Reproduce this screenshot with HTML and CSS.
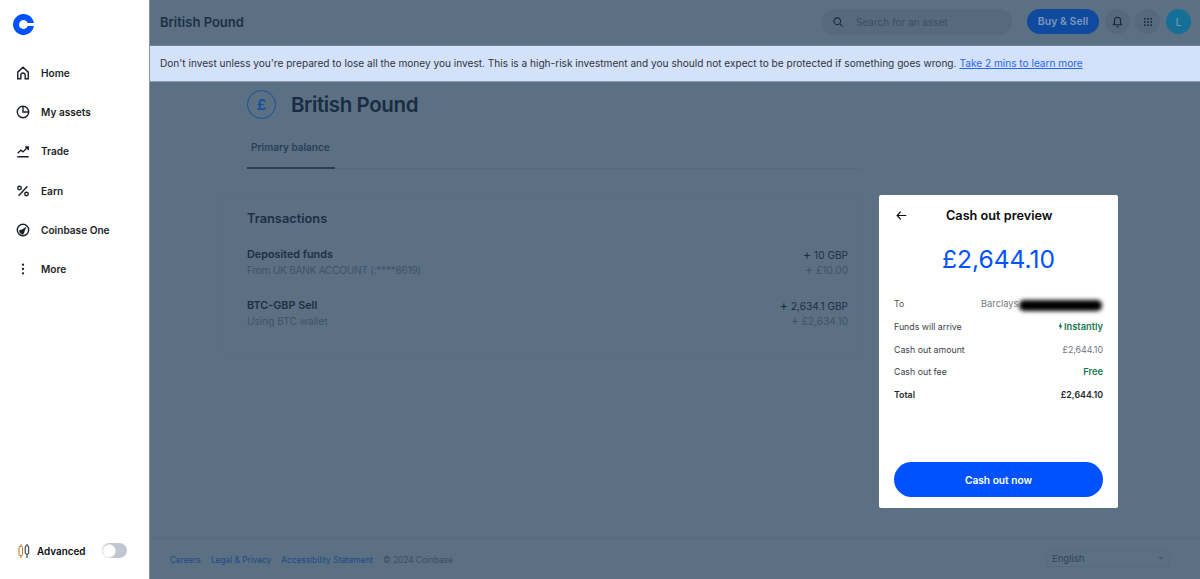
FILE: index.html
```html
<!DOCTYPE html>
<html lang="en">
<head>
    <meta charset="UTF-8">
    <meta name="viewport" content="width=device-width, initial-scale=1.0">
    <title>British Pound</title>
    <link rel="stylesheet" href="styles.css">
</head>
<body>

    <aside class="sidebar">
        <svg class="logo" viewBox="0 0 21 21"><path fill="#0052ff" d="M20.890 9A10.500 10.500 0 1 0 20.890 12H14.740A4.500 4.500 0 1 1 14.740 9z"/></svg>
        <nav class="nav">
            <a class="nav-item">
                <svg viewBox="0 0 16 16"><path d="M2 7 8 1.500 14 7v7.500h-3.500V10.500a2.500 2.500 0 0 0-5 0v4H2z"/></svg>
                Home
            </a>
            <a class="nav-item">
                <svg viewBox="0 0 16 16"><circle cx="8" cy="8" r="6.500"/><path d="M8 1.500V8h6.500"/></svg>
                My assets
            </a>
            <a class="nav-item">
                <svg viewBox="0 0 16 16"><path d="M1.500 14.500h13M2 10.500l3.500-3.500 2.500 2 5.500-5.500M10.500 3.500h3.500V7"/></svg>
                Trade
            </a>
            <a class="nav-item">
                <svg viewBox="0 0 16 16"><path d="M13 2.500 3 13.500"/><circle cx="4" cy="4.500" r="2"/><circle cx="12" cy="11.500" r="2"/></svg>
                Earn
            </a>
            <a class="nav-item">
                <svg viewBox="0 0 16 16"><circle cx="8" cy="8" r="6.500"/><path class="solid" d="M12 4 9.800 9.500 8.500 13 6 12.500 3.800 10.500 3.800 8 7 7.500z"/></svg>
                Coinbase One
            </a>
            <a class="nav-item">
                <svg viewBox="0 0 16 16"><circle class="solid" cx="8" cy="3" r="1.300"/><circle class="solid" cx="8" cy="8" r="1.300"/><circle class="solid" cx="8" cy="13" r="1.300"/></svg>
                More
            </a>
        </nav>
        <div class="advanced">
            <svg class="candles" viewBox="0 0 12 14">
                <path stroke="#b5761b" d="M3 0v14"/>
                <rect x="1" y="2.500" width="3.500" height="9" rx="1" fill="#fff" stroke="#b5761b"/>
                <path stroke="#1c2b3a" d="M9 0v14"/>
                <rect x="7.200" y="2" width="3.500" height="8" rx="1" fill="#fff" stroke="#1c2b3a"/>
            </svg>
            <span>Advanced</span>
            <span class="toggle"><span class="knob"></span></span>
        </div>
    </aside>

    <div class="main">
        <header class="topbar">
            <div class="page-name">British Pound</div>
            <div class="search">
                <svg viewBox="0 0 16 16"><circle cx="7" cy="7" r="4.500"/><path d="m10.500 10.500 3.500 3.500"/></svg>
                Search for an asset
            </div>
            <button class="buy-button">Buy &amp; Sell</button>
            <div class="round-button">
                <svg viewBox="0 0 16 16"><path d="M3 12h10l-1.300-2V6.500a3.700 3.700 0 0 0-7.400 0V10zM6.500 14.500h3"/></svg>
            </div>
            <div class="round-button">
                <svg class="dots" viewBox="0 0 10 10">
                    <rect x="0" y="0" width="2" height="2"/><rect x="4" y="0" width="2" height="2"/><rect x="8" y="0" width="2" height="2"/>
                    <rect x="0" y="4" width="2" height="2"/><rect x="4" y="4" width="2" height="2"/><rect x="8" y="4" width="2" height="2"/>
                    <rect x="0" y="8" width="2" height="2"/><rect x="4" y="8" width="2" height="2"/><rect x="8" y="8" width="2" height="2"/>
                </svg>
            </div>
            <div class="avatar">L</div>
        </header>

        <div class="banner">
            Don't invest unless you're prepared to lose all the money you invest. This is a high-risk investment and you should not expect to be protected if something goes wrong.
            <a href="#">Take 2 mins to learn more</a>
        </div>

        <div class="content">
            <div class="asset-head">
                <div class="asset-icon">£</div>
                <h1>British Pound</h1>
            </div>
            <div class="tabs">
                <div class="tab">Primary balance</div>
            </div>
            <section class="transactions">
                <h2>Transactions</h2>
                <div class="tx-row">
                    <div>
                        <div class="tx-title">Deposited funds</div>
                        <div class="tx-sub tx-bank">From UK BANK ACCOUNT (:****8619)</div>
                    </div>
                    <div class="tx-amount">
                        <div class="tx-value"><span class="plus">+</span> 10 GBP</div>
                        <div class="tx-sub"><span class="plus">+</span> £10.00</div>
                    </div>
                </div>
                <div class="tx-row">
                    <div>
                        <div class="tx-title">BTC-GBP Sell</div>
                        <div class="tx-sub">Using BTC wallet</div>
                    </div>
                    <div class="tx-amount">
                        <div class="tx-value"><span class="plus">+</span> 2,634.1 GBP</div>
                        <div class="tx-sub"><span class="plus">+</span> £2,634.10</div>
                    </div>
                </div>
            </section>
        </div>

        <footer class="footer">
            <a>Careers</a>
            <a>Legal &amp; Privacy</a>
            <a>Accessibility Statement</a>
            <span class="copyright">© 2024 Coinbase</span>
            <div class="language">English <span class="caret"></span></div>
        </footer>
    </div>

    <!-- Modal -->
    <div class="modal">
        <div class="modal-head">
            <svg viewBox="0 0 14 14"><path d="M13 7H1.500M6 2 1.500 7 6 12"/></svg>
            <span>Cash out preview</span>
        </div>
        <div class="modal-amount">£2,644.10</div>
        <div class="modal-rows">
            <div class="modal-row">
                <span class="row-to">To</span>
                <span class="barclays">Barclays<span class="redacted"></span></span>
            </div>
            <div class="modal-row">
                <span>Funds will arrive</span>
                <span class="green"><svg viewBox="0 0 8 12"><path d="M5 0 .8 7h2.600L2.800 12 7.200 5H4.500z"/></svg>Instantly</span>
            </div>
            <div class="modal-row">
                <span>Cash out amount</span>
                <span class="muted">£2,644.10</span>
            </div>
            <div class="modal-row">
                <span>Cash out fee</span>
                <span class="green">Free</span>
            </div>
            <div class="modal-row total">
                <span>Total</span>
                <span>£2,644.10</span>
            </div>
        </div>
        <button class="cash-button">Cash out now</button>
    </div>

</body>
</html>
```

FILE: styles.css
```css
* {
    margin: 0;
    padding: 0;
    box-sizing: border-box;
    font-family: Inter, "Noto Sans", sans-serif;
}

body {
    display: flex;
    height: 100vh;
    overflow: hidden;
    background-color: #5b7083;
    color: #16283b;
}

svg {
    fill: none;
    stroke: currentColor;
    stroke-width: 1.4;
}

.solid {
    fill: currentColor;
    stroke: none;
}

/* Sidebar */
.sidebar {
    width: 150px;
    flex-shrink: 0;
    display: flex;
    flex-direction: column;
    background-color: white;
    border-right: 1px solid #8793a0;
    color: #0a0b0d;
}

.logo {
    width: 21px;
    height: 21px;
    margin: 14px 0 0 13px;
    stroke: none;
}

.nav {
    display: flex;
    flex-direction: column;
    margin-top: 21px;
    gap: 5px;
}

.nav-item {
    display: flex;
    align-items: center;
    gap: 11px;
    height: 34.200px;
    padding-left: 16px;
    font-size: 10.100px;
    font-weight: 600;
    color: #1b1f27;
}

.nav-item svg {
    width: 14px;
    height: 14px;
    flex-shrink: 0;
    stroke-width: 1.600;
}

.advanced {
    display: flex;
    align-items: center;
    margin-top: auto;
    height: 57px;
    padding-left: 18px;
    font-size: 9.900px;
    font-weight: 600;
}

.candles {
    width: 12px;
    height: 14px;
    margin-right: 7px;
    stroke-width: 1;
}

.toggle {
    display: block;
    width: 25px;
    height: 15px;
    margin-left: 17px;
    border-radius: 8px;
    background-color: #c0c6d2;
}

.knob {
    display: block;
    width: 14px;
    height: 14px;
    border-radius: 50%;
    background-color: white;
    border: 1px solid #e4e6ea;
    margin-top: .5px;
}

/* Main column */
.main {
    flex: 1;
    display: flex;
    flex-direction: column;
    min-width: 0;
}

.topbar {
    display: flex;
    align-items: center;
    height: 46px;
    padding: 0 9px 2px 10px;
    border-bottom: 1px solid #6f8293;
    flex-shrink: 0;
}

.page-name {
    flex: 1;
    font-size: 13px;
    font-weight: 600;
    color: #1e2f44;
}

.search {
    display: flex;
    align-items: center;
    gap: 12px;
    width: 190px;
    height: 26px;
    padding-left: 10px;
    margin-right: 15px;
    border-radius: 13px;
    background-color: #566a7d;
    font-size: 10px;
    color: #3a4e64;
}

.search svg {
    width: 12px;
    height: 12px;
    color: #14263a;
}

.buy-button {
    width: 72px;
    height: 25px;
    border: none;
    border-radius: 13px;
    background-color: #0f4a9e;
    color: #7b97bd;
    font-size: 10.500px;
    font-weight: 600;
    margin-right: 6px;
}

.round-button {
    display: flex;
    align-items: center;
    justify-content: center;
    width: 25px;
    height: 25px;
    border-radius: 50%;
    background-color: #566a7d;
    margin-right: 5px;
    color: #14263a;
}

.round-button + .round-button {
    margin-right: 6px;
}

.round-button svg {
    width: 13px;
    height: 13px;
}

.round-button .dots {
    width: 8px;
    height: 8px;
    fill: currentColor;
    stroke: none;
}

.avatar {
    display: flex;
    align-items: center;
    justify-content: center;
    width: 25px;
    height: 25px;
    border-radius: 50%;
    background-color: #166f96;
    color: #6f9cb4;
    font-size: 10px;
    font-weight: 500;
}

.banner {
    height: 36px;
    flex-shrink: 0;
    display: flex;
    align-items: center;
    gap: 3px;
    padding: 0 0 2px 10px;
    background-color: #d3e1fb;
    border-bottom: 1px solid #8c9db2;
    font-size: 10.100px;
    color: #30343c;
    white-space: nowrap;
}

.banner a {
    color: #2a68f0;
}

.content {
    flex: 1;
    padding: 8px 338px 0 97px;
}

.asset-head {
    display: flex;
    align-items: center;
    gap: 15px;
}

.asset-icon {
    display: flex;
    align-items: center;
    justify-content: center;
    width: 29px;
    height: 29px;
    border: 1.700px solid #11509f;
    border-radius: 50%;
    color: #11509f;
    font-size: 15px;
    font-weight: 600;
}

h1 {
    font-size: 20.500px;
    font-weight: 600;
    letter-spacing: -.4px;
    color: #1a2c42;
}

.tabs {
    display: flex;
    margin-top: 14px;
    border-bottom: 1px solid #576b7e;
}

.tab {
    width: 88px;
    height: 36px;
    padding: 8px 0 0 4px;
    border-bottom: 2px solid #2a3f56;
    margin-bottom: -1px;
    font-size: 10px;
    font-weight: 600;
    color: #2a3f56;
}

.transactions {
    margin: 25px 0 0 -26px;
    padding: 16px 13px 0 25px;
    height: 161px;
    border-radius: 6px;
    border: 1px solid #586d80;
}

h2 {
    font-size: 12.800px;
    font-weight: 600;
    color: #1e2f44;
    margin-bottom: 22px;
}

.tx-row {
    display: flex;
    justify-content: space-between;
    height: 50.500px;
}

.tx-title {
    font-size: 10.800px;
    font-weight: 600;
    line-height: 14px;
    color: #1e2f44;
}

.tx-sub {
    font-size: 10.100px;
    line-height: 16px;
    color: #3f5369;
}

.tx-bank {
    letter-spacing: -.25px;
}

.tx-amount {
    text-align: right;
}

.tx-value {
    font-size: 10.100px;
    line-height: 14px;
    color: #1e2f44;
}

.plus {
    font-size: 13px;
    line-height: 0;
}

.footer {
    display: flex;
    align-items: center;
    height: 41px;
    flex-shrink: 0;
    padding: 2px 30px 0 20px;
    border-top: 1px solid #566a7d;
    font-size: 8.300px;
    color: #1d4a85;
    gap: 10px;
}

.copyright {
    color: #3a4e64;
}

.language {
    display: flex;
    align-items: center;
    justify-content: space-between;
    width: 124px;
    height: 17px;
    margin: -3px 0 0 auto;
    padding: 0 5px;
    border: 1px solid #566a7d;
    border-radius: 3px;
    font-size: 9.500px;
    color: #2f4359;
}

.caret {
    width: 0;
    height: 0;
    border-left: 3px solid transparent;
    border-right: 3px solid transparent;
    border-top: 3px solid #4a5e72;
}

/* Modal */
.modal {
    position: absolute;
    left: 879px;
    top: 195px;
    width: 239px;
    height: 313px;
    display: flex;
    flex-direction: column;
    padding: 0 15px;
    background-color: white;
    border-radius: 2px;
    color: #0a0b0d;
}

.modal-head {
    display: flex;
    align-items: center;
    height: 40px;
    font-size: 12.700px;
    font-weight: 600;
}

.modal-head svg {
    width: 11px;
    height: 11px;
    margin-left: 2px;
    stroke-width: 1.500;
}

.modal-head span {
    margin-left: 39px;
}

.modal-amount {
    margin-top: 9px;
    text-align: center;
    font-size: 24.600px;
    font-weight: 400;
    line-height: 30px;
    color: #0052ff;
}

.modal-rows {
    display: flex;
    flex-direction: column;
    margin-top: 22px;
    gap: 7.800px;
}

.modal-row {
    display: flex;
    justify-content: space-between;
    align-items: center;
    height: 15px;
    font-size: 8.800px;
    color: #3c4149;
}

.row-to {
    color: #5b4a4a;
}

.barclays {
    display: flex;
    align-items: center;
    color: #747a85;
    width: 122px;
    position: relative;
    font-size: 9.300px;
}

.redacted {
    position: absolute;
    left: 38px;
    right: 1px;
    top: 2px;
    height: 11px;
    border-radius: 5px;
    background-color: #000;
    filter: blur(2px);
}

.green {
    display: flex;
    align-items: center;
    gap: 1px;
    color: #16794f;
    font-weight: 600;
    font-size: 9.300px;
}

.green svg {
    width: 5px;
    height: 8px;
    fill: currentColor;
    stroke: none;
}

.muted {
    color: #6e747e;
}

.total {
    font-weight: 600;
    color: #22262d;
}

.cash-button {
    height: 35px;
    margin-top: auto;
    margin-bottom: 11px;
    padding-top: 1px;
    border: none;
    border-radius: 18px;
    background-color: #0052ff;
    color: white;
    font-size: 10.200px;
    font-weight: 600;
}
```
